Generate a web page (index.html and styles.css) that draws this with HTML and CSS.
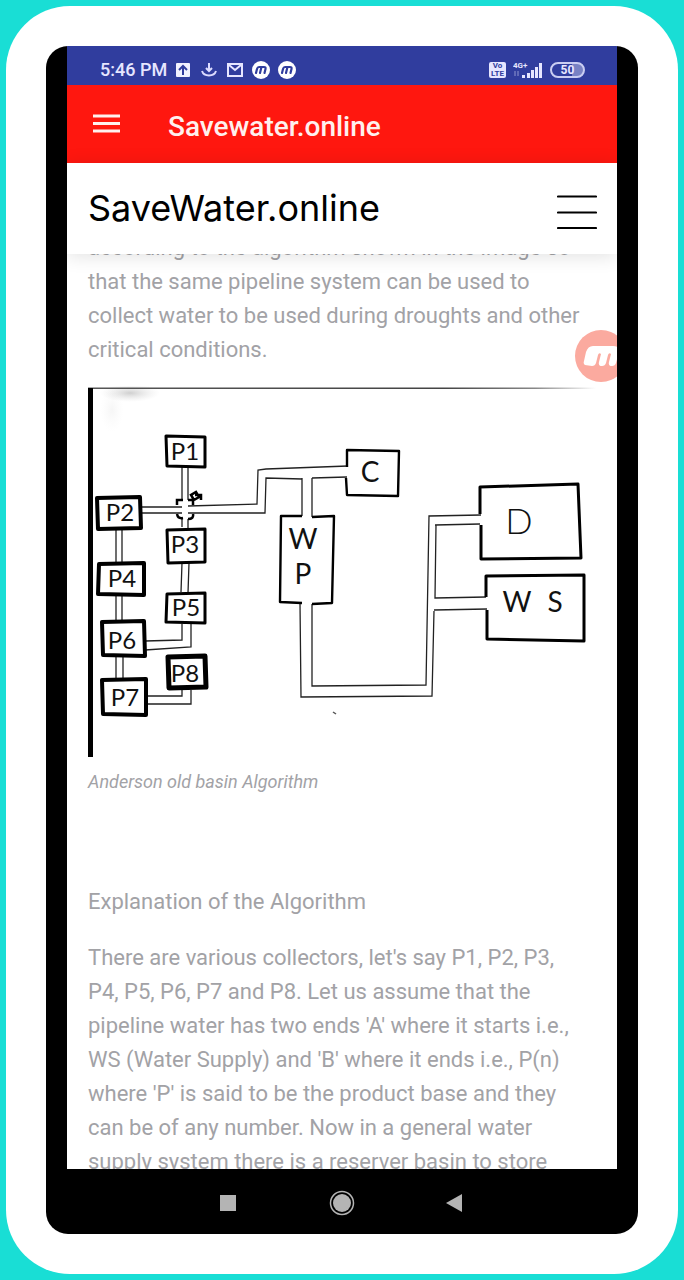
FILE: index.html
```html
<!DOCTYPE html>
<html lang="en">
<head>
<meta charset="utf-8">
<meta name="viewport" content="width=device-width, initial-scale=1">
<title>Savewater.online</title>
<link rel="stylesheet" href="styles.css">
</head>
<body>
<div class="case">
  <div class="phone">
    <div class="screen">
      <div class="status">
        <span class="clock">5:46 PM</span>
        <div class="notices">
          <svg class="glyph" viewBox="0 0 20 20" aria-hidden="true"><rect x="3" y="3" width="14" height="14" rx="1" fill="#f1f1ff"/><path d="M10 15V7M6 10l4-4 4 4" fill="none" stroke="#303d9e" stroke-width="2"/></svg>
          <svg class="glyph" viewBox="0 0 20 20" aria-hidden="true"><path d="M10 3v8M7 8l3 3 3-3M3 11c2 6 12 6 14 0" fill="none" stroke="#dcdcff" stroke-width="2"/></svg>
          <svg class="glyph" viewBox="0 0 20 20" aria-hidden="true"><rect x="3" y="4" width="14" height="12" fill="none" stroke="#e6e6ff" stroke-width="2"/><path d="M4 5l6 5 6-5" fill="none" stroke="#e6e6ff" stroke-width="2"/></svg>
          <svg class="glyph" viewBox="0 0 20 20" aria-hidden="true"><circle cx="10" cy="10" r="9" fill="#fff"/><path d="M5 13l1-4q.5-2 2-2h5q2 0 1.500 2l-1 4M9 13l1.200-5" fill="none" stroke="#303d9e" stroke-width="2.200" stroke-linecap="round" stroke-linejoin="round"/></svg>
          <svg class="glyph" viewBox="0 0 20 20" aria-hidden="true"><circle cx="10" cy="10" r="9" fill="#fff"/><path d="M5 13l1-4q.5-2 2-2h5q2 0 1.500 2l-1 4M9 13l1.200-5" fill="none" stroke="#303d9e" stroke-width="2.200" stroke-linecap="round" stroke-linejoin="round"/></svg>
        </div>
        <div class="radio">
          <span class="volte"><span>Vo</span><span>LTE</span></span>
          <svg class="signal" viewBox="0 0 30 18" aria-hidden="true"><text x="0" y="7" class="net">4G+</text><path d="M2 10v5M5 15v-5" stroke="#8f97d0" fill="none"/><path d="M9 17v-3h3v3zM14 17v-5h3v5zM18 17V9h3v8zM22 17V6h3v11zM26 17V2h3v15z" fill="#e6e6ff"/></svg>
          <span class="battery">50</span>
        </div>
      </div>
      <div class="appbar">
        <button class="drawer" type="button" aria-label="Open navigation">
          <svg viewBox="0 0 27 20" aria-hidden="true"><path d="M0 2h27M0 9.500h27M0 17h27" stroke="#fff0ee" stroke-width="2.800"/></svg>
        </button>
        <span class="apptitle">Savewater.online</span>
      </div>
      <header class="sitebar">
        <a class="brand" href="#">SaveWater.online</a>
        <button class="menu" type="button" aria-label="Menu">
          <svg viewBox="0 0 40 36" aria-hidden="true"><path d="M1 2.500h38M1 18.500h38M1 34h38" stroke="#000" stroke-width="2.200" stroke-linecap="round"/></svg>
        </button>
      </header>
      <main class="article">
        <p class="lead">according to the algorithm shown in the image so that the same pipeline system can be used to collect water to be used during droughts and other critical conditions.</p>
        <figure class="figure">
          <svg class="diagram" viewBox="88 386 508 372" role="img" aria-label="Pipeline diagram">
            <defs>
              <linearGradient id="edge" gradientUnits="userSpaceOnUse" x1="88" y1="0" x2="596" y2="0"><stop offset="0" stop-color="#555"/><stop offset=".7" stop-color="#444"/><stop offset=".88" stop-color="#888"/><stop offset="1" stop-color="#fff"/></linearGradient>
              <radialGradient id="smudge"><stop offset="0" stop-color="#bbb" stop-opacity=".7"/><stop offset="1" stop-color="#ddd" stop-opacity="0"/></radialGradient>
            </defs>
            <ellipse cx="130" cy="393" rx="30" ry="9" fill="url(#smudge)"/>
            <ellipse cx="112" cy="410" rx="12" ry="22" fill="url(#smudge)" opacity=".2"/>
            <path d="M88 387.500h508v1.500H88z" fill="url(#edge)"/>
            <path d="M88 388h5v369h-5z"/>
            <g class="pipe">
              <path d="M182 467v33M188 467v33M182 519v8M188 519v9"/>
              <path d="M141 507h41M141 513h41M188 506l69-2 1-34 8-1 82-3M188 513h77l1-35 36 1M312 478l35-1"/>
              <path d="M116 530v33M122 530v33M182 563l-1 29M189 563l-1 30M116 596v24M122 596v24M116 657v21M123 657v21"/>
              <path d="M182 624v16l-37 1M191 624v23l-46 3M182 690v6h-36M191 690v14h-45"/>
              <path d="M302 478v38M312 478v39M300 603l1 94 131-1 2-85M312 604v82l114-1 3-169 52-1M435 525l45-1M436 525l-1 73 51-1M434 610l53-1"/>
            </g>
            <g class="box">
              <path d="M166 436l39 1v30l-38-1z"/>
              <path d="M97 498l43-1 1 31-43 1z" class="heavy"/>
              <path d="M167 530l38-1v33l-37 1z"/>
              <path d="M99 564l45-1v32l-46-1z" class="heavy"/>
              <path d="M167 594l38-1v30l-39-1z"/>
              <path d="M102 622l42-1 1 35-42-1z" class="heavy"/>
              <path d="M102 680l44-1v36l-43-1z" class="heavy"/>
              <path d="M168 657l37-1 1 31-37 1z" class="heaviest"/>
              <path d="M347 467v-17l52 1-1 45-51-1-1-17M302 516h-21l-1 86 22 1M312 517l22-1-2 87-20 1" class="light"/>
              <path d="M480 514v-27l98-3 3 74-100 1V525"/>
              <path d="M486 597v-21l98-1v66l-97-2v-29"/>
            </g>
            <path d="M177 505v-5h6M188 500h5v5M177 514q1 5 6 4M188 519q6 0 5-5M194 500l-3-5 5-3 3 5-5 3M195 495h6v5" fill="none" stroke="#000" stroke-width="2.500"/>
            <g class="ink">
              <text x="185" y="460">P1</text>
              <text x="120" y="521">P2</text>
              <text x="185" y="553">P3</text>
              <text x="122" y="587">P4</text>
              <text x="186" y="616">P5</text>
              <text x="122" y="649">P6</text>
              <text x="185" y="682">P8</text>
              <text x="125" y="706">P7</text>
              <text x="370" y="482" class="big">C</text>
              <text x="303" y="549" class="big">W</text>
              <text x="303" y="584" class="big bold">P</text>
              <text x="519" y="534" class="tall">D</text>
              <text x="517" y="612" class="big">W</text>
              <text x="555" y="612" class="big">S</text>
            </g>
            <path d="M333 712l3 2" stroke="#555" stroke-width="1.500"/>
          </svg>
          <figcaption class="caption">Anderson old basin Algorithm</figcaption>
        </figure>
        <p class="subhead">Explanation of the Algorithm</p>
        <p class="text">There are various collectors, let's say P1, P2, P3, P4, P5, P6, P7 and P8. Let us assume that the pipeline water has two ends 'A' where it starts i.e., WS (Water Supply) and 'B' where it ends i.e., P(n) where 'P' is said to be the product base and they can be of any number. Now in a general water supply system there is a reserver basin to store</p>
      </main>
      <button class="recorder" type="button" aria-label="Screen recorder">
        <svg viewBox="0 0 52 52" aria-hidden="true"><path d="M10 35q-2-1-1-4l2-9q2-6 7-6h20q7 0 6 6l-3 11q-1 3-4 3-4 0-3-4l2-8q-2-2-3 1l-2 8q-1 3-4 3-4 0-3-4l2-8q-2-2-3 1l-2 8q-1 3-4 3z" fill="#fff"/></svg>
      </button>
    </div>
    <nav class="keys">
      <button class="key" type="button" aria-label="Recent apps"><svg viewBox="0 0 28 28" aria-hidden="true"><path d="M6 6h16v16H6z" fill="#b4b4b4"/></svg></button>
      <button class="key" type="button" aria-label="Home"><svg viewBox="0 0 28 28" aria-hidden="true"><circle cx="14" cy="14" r="9" fill="#b4b4b4"/><circle cx="14" cy="14" r="11.500" fill="none" stroke="#b4b4b4" stroke-width="1.500"/></svg></button>
      <button class="key" type="button" aria-label="Back"><svg viewBox="0 0 28 28" aria-hidden="true"><path d="M4 14l16-9v18z" fill="#b4b4b4"/></svg></button>
    </nav>
  </div>
</div>
</body>
</html>
```
FILE: styles.css
```css
* {
  box-sizing: border-box;
}

body {
  margin: 0;
  height: 100vh;
  padding: 6px;
  background: #19ded5;
  font-family: Roboto, "Liberation Sans", sans-serif;
}

button {
  display: flex;
  padding: 0;
  border: 0;
  background: none;
}

p,
figure {
  margin: 0;
}

.case {
  height: 100%;
  padding: 40px;
  border-radius: 64px;
  background: #fff;
}

.phone {
  display: flex;
  flex-direction: column;
  height: 100%;
  padding: 0 21px;
  border-radius: 22px;
  background: #000;
  overflow: hidden;
}

.screen {
  position: relative;
  display: flex;
  flex: 1;
  flex-direction: column;
  min-height: 0;
  background: #fff;
  overflow: hidden;
}

.status {
  display: flex;
  flex: none;
  align-items: center;
  gap: 6px;
  height: 39px;
  padding: 8px 32px 0 33px;
  background: #303d9e;
  color: #e6e6ff;
}

.clock {
  font-size: 18px;
  font-weight: 500;
}

.notices {
  display: flex;
  flex: 1;
  gap: 6px;
}

.glyph {
  width: 20px;
  height: 20px;
}

.radio {
  display: flex;
  align-items: center;
  gap: 7px;
}

.volte {
  display: grid;
  width: 17px;
  height: 16px;
  border-radius: 2px;
  background: #e6e6ff;
  color: #303d9e;
  font-size: 8px;
  font-weight: 700;
  line-height: 8px;
  text-align: center;
}

.signal {
  width: 30px;
  height: 18px;
}

.net {
  fill: #e6e6ff;
  font-size: 8px;
  font-weight: 700;
}

.battery {
  width: 35px;
  height: 16px;
  border: 2px solid #c9cdf2;
  border-radius: 8px;
  background: linear-gradient(90deg, #303d9e 65%, #7982c4 65%);
  font-size: 12px;
  font-weight: 700;
  line-height: 12px;
  text-align: center;
}

.appbar {
  display: flex;
  flex: none;
  align-items: center;
  gap: 48px;
  height: 78px;
  padding: 0 26px;
  background: #ff170f;
}

.drawer svg {
  width: 27px;
  height: 20px;
}

.apptitle {
  padding-top: 4px;
  color: #fff0ee;
  font-size: 28px;
  font-weight: 500;
}

.sitebar {
  position: relative;
  z-index: 1;
  display: flex;
  flex: none;
  align-items: center;
  justify-content: space-between;
  height: 91px;
  padding: 6px 20px 0 21px;
  background: #fff;
  box-shadow: 0 2px 18px rgba(0, 0, 0, 0.12);
}

.brand {
  padding-bottom: 8px;
  color: #000;
  font-family: Inter, Lato, sans-serif;
  font-size: 36px;
  text-decoration: none;
}

.menu svg {
  width: 40px;
  height: 36px;
}

.article {
  flex: 1;
  min-height: 0;
  padding: 0 21px;
  color: #a2a2a6;
  font-size: 22px;
  line-height: 34px;
  overflow: hidden;
}

/* the page is scrolled, so its first line sits under the site bar */
.lead {
  margin-top: -23px;
  padding-right: 8px;
}

.figure {
  margin-top: 19px;
}

.diagram {
  display: block;
  width: 100%;
  height: auto;
}

.caption {
  margin-top: 12px;
  font-size: 18px;
  font-style: italic;
  line-height: 24px;
}

.subhead {
  margin-top: 91px;
}

.text {
  margin-top: 22px;
  padding-right: 8px;
}

.pipe {
  fill: none;
  stroke: #222;
  stroke-width: 1.3;
}

.box {
  fill: none;
  stroke: #000;
  stroke-width: 3;
  stroke-linejoin: round;
}

.light {
  stroke-width: 2.4;
}

.heavy {
  stroke-width: 4;
}

.heaviest {
  stroke-width: 5;
}

.ink {
  fill: #111;
  font-family: Lato, sans-serif;
  font-size: 24px;
  font-weight: 400;
  text-anchor: middle;
}

.big {
  font-size: 28px;
}

.tall {
  font-size: 36px;
  font-weight: 300;
}

.recorder {
  position: absolute;
  top: 284px;
  right: -10px;
  z-index: 2;
  width: 52px;
  height: 52px;
  border-radius: 50%;
  background: #fbaa9f;
}

.keys {
  display: flex;
  flex: none;
  align-items: center;
  justify-content: center;
  gap: 86px;
  height: 65px;
  padding-top: 2px;
}

.key svg {
  width: 28px;
  height: 28px;
}
```
